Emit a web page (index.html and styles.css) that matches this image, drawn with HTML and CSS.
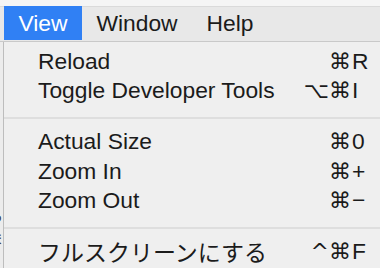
FILE: index.html
```html
<!DOCTYPE html>
<html lang="ja">
<head>
    <meta charset="UTF-8">
    <title>View menu</title>
    <link rel="stylesheet" href="styles.css">
</head>
<body>
    <div class="top-strip"></div>

    <div class="menubar">
        <div class="menubar-item active">View</div>
        <div class="menubar-item">Window</div>
        <div class="menubar-item">Help</div>
    </div>

    <div class="below">
        <div class="gutter">
            <span class="peek peek-1">っ</span>
            <span class="peek peek-2">ま</span>
        </div>

        <div class="menu">
            <div class="menu-item">
                <span class="label">Reload</span>
                <span class="mods">⌘</span>
                <span class="key">R</span>
            </div>
            <div class="menu-item">
                <span class="label">Toggle Developer Tools</span>
                <span class="mods">⌥⌘</span>
                <span class="key">I</span>
            </div>

            <div class="separator"></div>

            <div class="menu-item">
                <span class="label">Actual Size</span>
                <span class="mods">⌘</span>
                <span class="key">0</span>
            </div>
            <div class="menu-item">
                <span class="label">Zoom In</span>
                <span class="mods">⌘</span>
                <span class="key">+</span>
            </div>
            <div class="menu-item">
                <span class="label">Zoom Out</span>
                <span class="mods">⌘</span>
                <span class="key">−</span>
            </div>

            <div class="separator"></div>

            <div class="menu-item">
                <span class="label jp">フルスクリーンにする</span>
                <span class="mods">^⌘</span>
                <span class="key">F</span>
            </div>
        </div>
    </div>
</body>
</html>
```

FILE: styles.css
```css
:root {
    --bar: #e8e8e8;
    --menu: #efefef;
    --blue: #3080f4;
    --text: #1b1b1b;
}

* {
    box-sizing: border-box;
    margin: 0;
    padding: 0;
}

body {
    width: 380px;
    height: 268px;
    overflow: hidden;
    background: var(--menu);
    color: var(--text);
    font-family: "Liberation Sans", "DejaVu Sans", "Noto Sans CJK JP", sans-serif;
    font-size: 22.8px;
}

.top-strip {
    height: 7px;
    background: #f5f5f5;
    border-bottom: 1px solid #dadada;
}

.menubar {
    display: flex;
    height: 35px;
    padding-left: 4px;
    background: var(--bar);
    border-bottom: 1px solid #c9c9c9;
}

.menubar-item {
    padding: 0 14.5px;
    height: 33px;
    line-height: 34px;
    margin-top: -1px;
}

.menubar-item.active {
    background: var(--blue);
    color: white;
    height: 34px;
}

.below {
    display: flex;
    height: 226px;
}

.gutter {
    position: relative;
    width: 4px;
    background: #ececec;
    border-right: 1px solid #bdbdbd;
    overflow: hidden;
}

.peek {
    position: absolute;
    right: 0;
    font-size: 14px;
    font-family: "Noto Sans CJK JP", sans-serif;
    color: #333;
}

.peek-1 { top: 164px; }
.peek-2 { top: 186px; }

.menu {
    flex: 1;
    padding-top: 4.8px;
    background: var(--menu);
}

.menu-item {
    display: grid;
    grid-template-columns: 1fr auto 29px;
    height: 29.5px;
    line-height: 29.5px;
    padding-left: 34px;
    white-space: nowrap;
}

.mods {
    text-align: right;
    font-family: "DejaVu Sans", sans-serif;
    font-size: 22px;
}

.key {
    text-align: left;
    padding-left: 1px;
}

.label.jp {
    font-family: "Noto Sans CJK JP", sans-serif;
    font-size: 23px;
}

.separator {
    height: 21.5px;
    padding-top: 11px;
}

.separator::before {
    content: "";
    display: block;
    height: 2px;
    background: #dedede;
}
```
